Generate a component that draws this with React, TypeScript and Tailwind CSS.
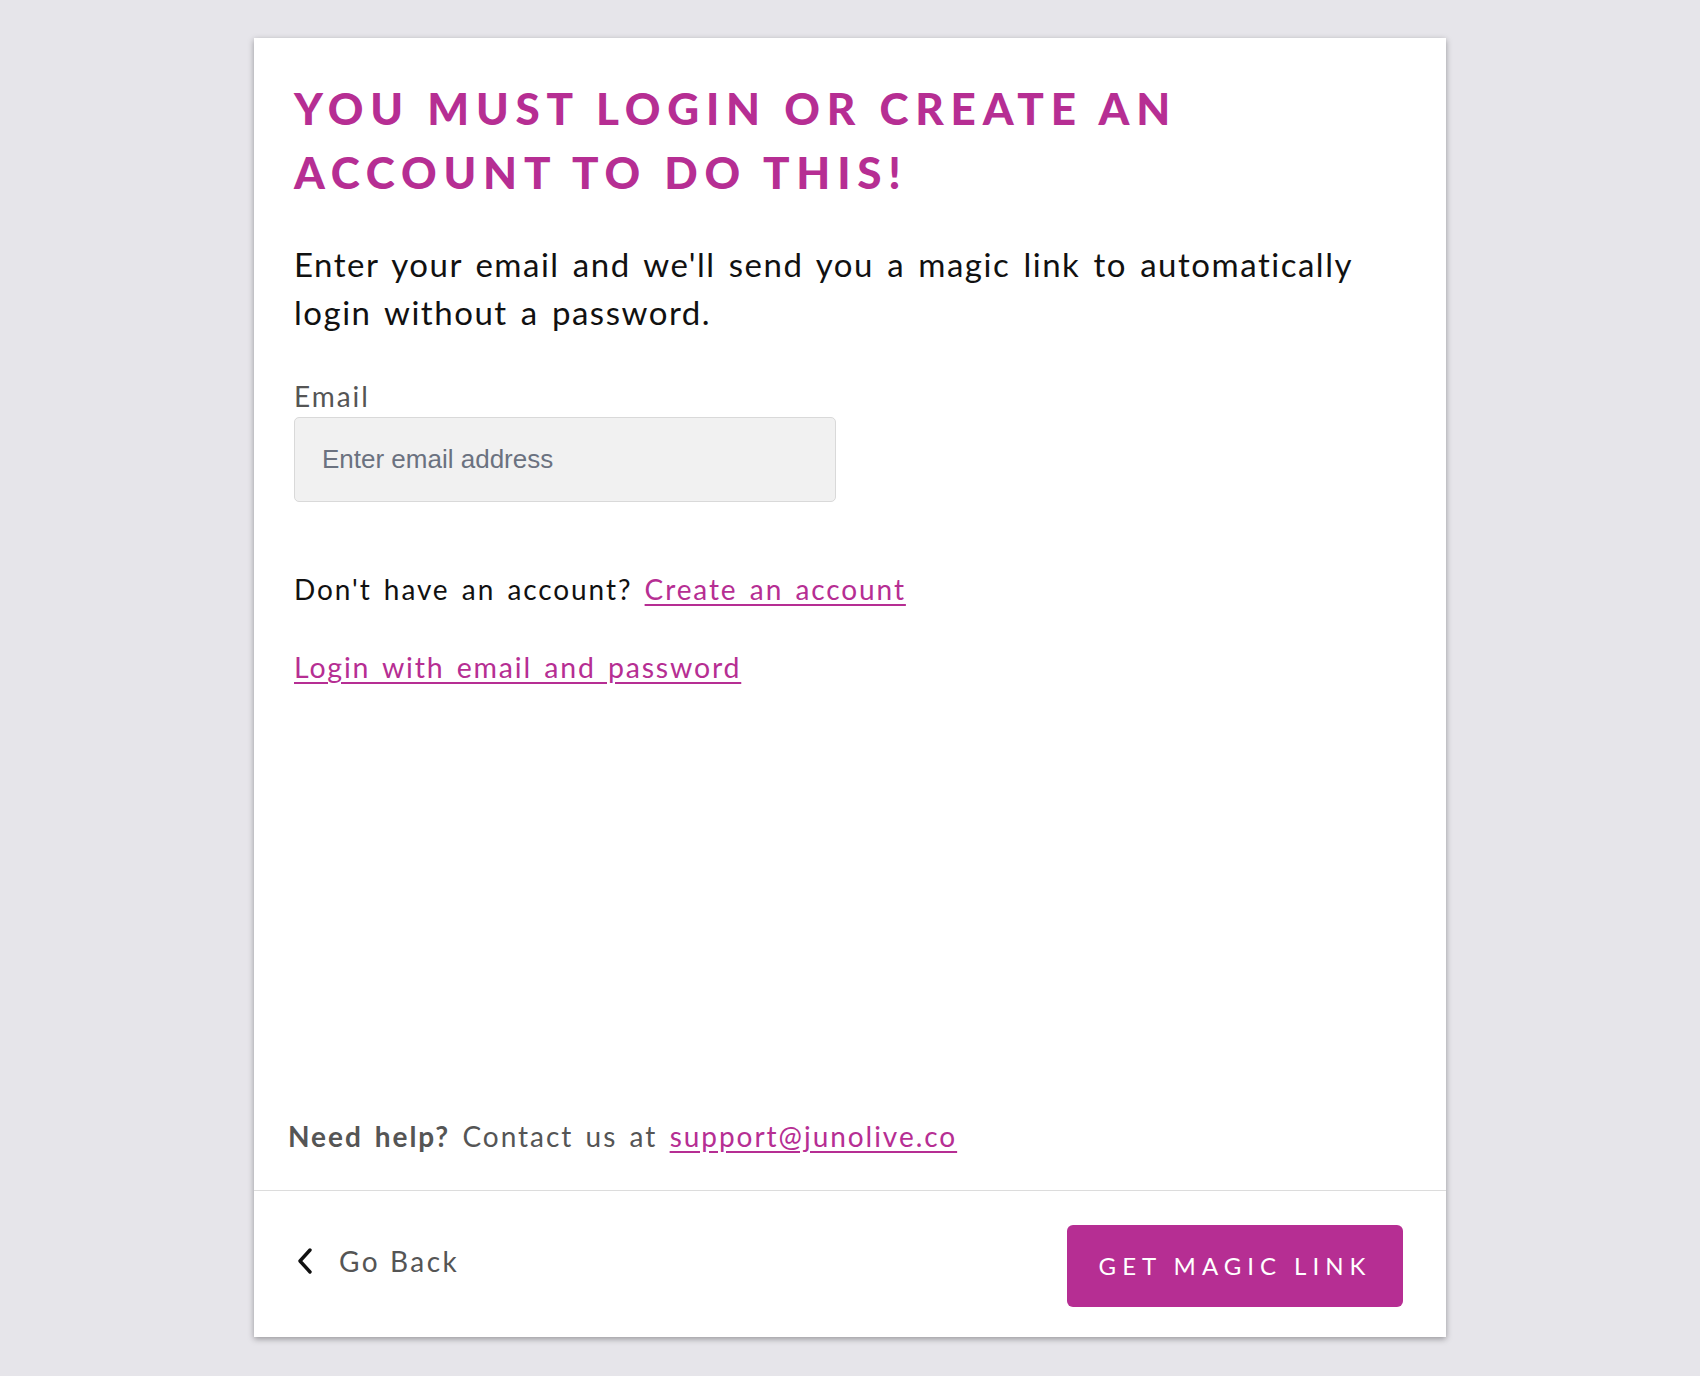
export default function App() {
  return (
    <div className="min-h-screen bg-[#e6e5ea] pt-[38px] font-['Lato',sans-serif]">
      <div className="mx-auto flex h-[1299px] w-[1192px] flex-col bg-white shadow-[0_2px_6px_rgba(0,0,0,0.35)]">
        <div className="flex flex-1 flex-col px-[40px] pt-[38px] [word-spacing:0.2em]">
          <h1 className="text-[44px] font-black uppercase leading-[64px] tracking-[0.155em] text-[#b62e93] [word-spacing:0]">
            You must login or create an
            <br />
            account to do this!
          </h1>
          <p className="mt-[36px] text-[33px] leading-[48px] tracking-[0.046em] text-[#111]">
            Enter your email and we'll send you a magic link to automatically login without a
            password.
          </p>
          <label className="mt-[44px] block text-[28px] leading-[32px] tracking-[0.07em] text-[#555]">
            Email
          </label>
          <input
            type="email"
            placeholder="Enter email address"
            className="mt-[5px] h-[85px] w-[542px] rounded-[5px] border border-[#d9d9d9] bg-[#f1f1f1] px-[27px] font-['Liberation_Sans',sans-serif] text-[26px] tracking-normal [word-spacing:0] placeholder:text-[#6b7280]"
          />
          <p className="mt-[69px] text-[28px] leading-[36px] tracking-[0.068em] text-[#111]">
            Don't have an account?{" "}
            <a href="#" className="text-[#b62e93] underline underline-offset-4">
              Create an account
            </a>
          </p>
          <a
            href="#"
            className="mt-[42px] self-start text-[28.5px] leading-[36px] tracking-[0.063em] text-[#b62e93] underline underline-offset-4"
          >
            Login with email and password
          </a>
          <div className="flex-1" />
          <p className="-ml-[6px] mb-[36px] text-[28px] leading-[36px] tracking-[0.07em] text-[#555]">
            <span className="font-bold">Need help?</span> Contact us at{" "}
            <a href="#" className="text-[#b62e93] underline underline-offset-4">
              support@junolive.co
            </a>
          </p>
        </div>
        <div className="flex h-[147px] items-center justify-between border-t border-[#dcdcdc] px-[43px]">
          <button className="flex items-center gap-[26px] text-[28px] tracking-[0.09em] text-[#555]">
            <svg width="16" height="28" viewBox="0 0 16 28" fill="none" className="-mt-[6px]">
              <path d="M13 3L3 14l10 11" stroke="#111" strokeWidth="3.4" strokeLinecap="round" strokeLinejoin="round" />
            </svg>
            <span className="-mt-[6px]">Go Back</span>
          </button>
          <button className="mt-[4px] h-[82px] w-[336px] rounded-[6px] bg-[#b62e93] text-[24px] uppercase tracking-[0.25em] text-white">
            Get magic link
          </button>
        </div>
      </div>
    </div>
  );
}
